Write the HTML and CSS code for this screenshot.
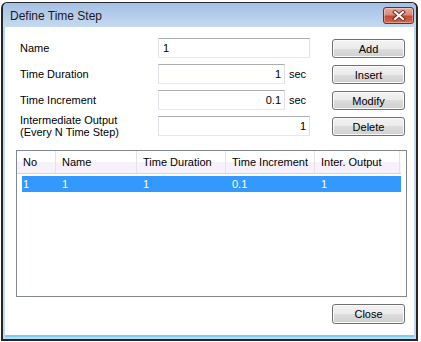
FILE: index.html
```html
<!DOCTYPE html>
<html lang="en">
<head>
	<meta charset="UTF-8">
	<title>Define Time Step</title>
	<link rel="stylesheet" href="styles.css">
</head>
<body>
	<div class="window">
		<div class="titlebar">
			<span class="title">Define Time Step</span>
			<button class="close-x" title="Close">
				<svg width="14" height="11" viewBox="0 0 14 11">
					<path d="M3 2 L11 9 M11 2 L3 9" stroke="#7a2a20" stroke-width="4" stroke-linecap="square"/>
					<path d="M3 2 L11 9 M11 2 L3 9" stroke="#ffffff" stroke-width="2" stroke-linecap="square"/>
				</svg>
			</button>
		</div>
		<div class="client">
			<div class="form">
				<label class="lbl">Name</label>
				<div class="field"><input class="txt long" type="text" value="1"></div>
				<button class="btn">Add</button>

				<label class="lbl">Time Duration</label>
				<div class="field"><input class="txt num" type="text" value="1"><span class="unit">sec</span></div>
				<button class="btn">Insert</button>

				<label class="lbl">Time Increment</label>
				<div class="field"><input class="txt num" type="text" value="0.1"><span class="unit">sec</span></div>
				<button class="btn">Modify</button>

				<label class="lbl two">Intermediate Output<br>(Every N Time Step)</label>
				<div class="field"><input class="txt long num" type="text" value="1"></div>
				<button class="btn">Delete</button>
			</div>

			<div class="list">
				<div class="head">
					<div class="col">No</div>
					<div class="col">Name</div>
					<div class="col">Time Duration</div>
					<div class="col">Time Increment</div>
					<div class="col">Inter. Output</div>
				</div>
				<div class="row selected">
					<div class="cell">1</div>
					<div class="cell">1</div>
					<div class="cell">1</div>
					<div class="cell">0.1</div>
					<div class="cell">1</div>
				</div>
			</div>

			<div class="bottom">
				<button class="btn">Close</button>
			</div>
		</div>
	</div>
</body>
</html>
```

FILE: styles.css
```css
body {
	margin: 0;
	background-color: #fff;
	font-family: "Liberation Sans", Arial, sans-serif;
	font-size: 11px;
	color: #000;
}
.window {
	margin: 2px 0 0 1px;
	width: 417px;
	height: 339px;
	box-sizing: border-box;
	border: 2px solid #262626;
	border-top-width: 1px;
	border-radius: 6px 6px 0 0;
	background: linear-gradient(#b3cbe8, #c3d8ef 40px, #c3d8ef);
	display: flex;
	flex-direction: column;
}
.titlebar {
	height: 24px;
	display: flex;
	align-items: center;
	justify-content: space-between;
	padding: 0 2px 0 7px;
	border-radius: 5px 5px 0 0;
	background: linear-gradient(#a4c0e2, #b4cceb 50%, #c6daf0);
}
.title {
	font-size: 12px;
	color: #1a1a1a;
	padding-top: 1px;
}
.close-x {
	width: 31px;
	height: 17px;
	margin-top: 1px;
	padding: 0;
	border: 1px solid #6e2e24;
	border-radius: 3px;
	background: linear-gradient(#e6a99c, #d88a79 45%, #c54a34 55%, #cf6a50);
	box-shadow: inset 0 0 0 1px rgba(255,255,255,.35);
	display: flex;
	align-items: center;
	justify-content: center;
}
.client {
	flex: 1;
	margin: 0 2px 2px 2px;
	background-color: #fff;
	border-bottom: 2px solid #74cff0;
	display: flex;
	flex-direction: column;
	padding-top: 11px;
}
.form {
	display: grid;
	grid-template-columns: 138px 152px 73px;
	grid-auto-rows: 20px;
	column-gap: 22px;
	row-gap: 6px;
	padding-left: 15px;
	column-gap: 0;
}
.form .btn {
	margin-left: 22px;
	height: 19px;
	align-self: end;
}
.lbl {
	display: flex;
	align-items: center;
}
.lbl.two {
	line-height: 12px;
}
.field {
	display: flex;
	align-items: center;
	gap: 4px;
}
.txt {
	box-sizing: border-box;
	width: 127px;
	height: 20px;
	margin: 0;
	padding: 0 3px 0 4px;
	border: 1px solid;
	border-color: #abadb3 #dbdfe6 #e3e9ef #e2e3ea;
	font-family: "Liberation Sans", Arial, sans-serif;
	font-size: 11px;
	color: #000;
	outline: none;
}
.txt.long {
	width: 152px;
}
.txt.num {
	text-align: right;
}
.unit {
	color: #000;
}
.btn {
	box-sizing: border-box;
	width: 73px;
	height: 20px;
	padding: 0;
	border: 1px solid #707070;
	border-radius: 3px;
	background: linear-gradient(#f2f2f2, #ebebeb 50%, #dddddd 50%, #cfcfcf);
	box-shadow: inset 0 0 0 1px #fbfbfb;
	font-family: "Liberation Sans", Arial, sans-serif;
	font-size: 11px;
	color: #000;
}
.list {
	margin: 14px 0 0 11px;
	width: 391px;
	height: 147px;
	box-sizing: border-box;
	border: 1px solid #828790;
}
.head {
	display: grid;
	grid-template-columns: 39px 81px 89px 89px 85px;
	height: 22px;
	border-bottom: 1px solid #d5d5d5;
	margin-right: 5px;
	background: linear-gradient(#fff 50%, #f6f1fb 50%);
}
.col {
	display: flex;
	align-items: center;
	padding-left: 6px;
	border-right: 1px solid #e3e3e8;
	white-space: nowrap;
}
.row {
	display: grid;
	grid-template-columns: 34px 81px 89px 89px 85px;
	height: 16px;
	margin: 2px 0 0 5px;
	width: 379px;
}
.row.selected {
	background-color: #3399ff;
	color: #fff;
}
.cell {
	display: flex;
	align-items: center;
	padding-left: 6px;
}
.cell:first-child {
	padding-left: 1px;
}
.bottom {
	display: flex;
	justify-content: flex-end;
	padding: 7px 9px 0 0;
}
```
